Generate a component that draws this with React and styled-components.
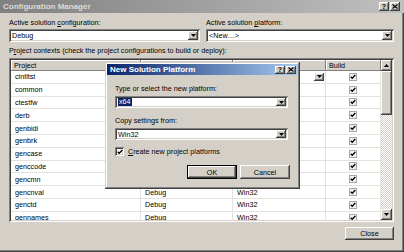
import styled, { createGlobalStyle, css } from 'styled-components';

const GlobalStyle = createGlobalStyle`
  html, body { margin: 0; padding: 0; background: #d4d0c8; }
  body {
    font-family: "Liberation Sans", Arial, sans-serif;
    font-size: 7.2px;
    color: #000;
  }
  #root { width: 404px; height: 252px; }
`;

const raised = css`
  box-shadow: inset -1px -1px #404040, inset 1px 1px #fff, inset -2px -2px #808080;
`;

const sunken = css`
  box-shadow: inset 1px 1px #808080, inset -1px -1px #fff, inset 2px 2px #404040, inset -2px -2px #d4d0c8;
`;

const Window = styled.div`
  position: relative;
  width: 404px;
  height: 252px;
  box-sizing: border-box;
  display: flex;
  flex-direction: column;
  background: #d4d0c8;
  box-shadow: inset -1px -1px #404040, inset -2px -2px #808080;
  overflow: hidden;
`;

const TitleBar = styled.div`
  height: ${p => p.$h}px;
  flex: none;
  display: flex;
  align-items: center;
  justify-content: space-between;
  padding: 0 ${p => p.$pr}px 0 3px;
  background: ${p => p.$active
    ? 'linear-gradient(90deg, #0a246a, #a6caf0)'
    : 'linear-gradient(90deg, #808080, #c0c0c0)'};
  color: ${p => p.$active ? '#fff' : '#dcdcdc'};
  font-weight: bold;
  font-size: 8px;
  white-space: nowrap;
`;

const CaptionButtons = styled.div`
  display: flex;
  gap: 1px;
`;

const CaptionButton = styled.span`
  width: 10px;
  height: ${p => p.$h || 9}px;
  background: #d4d0c8;
  ${raised};
  display: flex;
  align-items: center;
  justify-content: center;
  color: #000;
  font-size: 7px;
  font-weight: bold;
  line-height: 1;
`;

const Body = styled.div`
  flex: 1;
  display: flex;
  flex-direction: column;
  padding: 5px 10px 0 9px;
`;

const FieldRow = styled.div`
  display: grid;
  grid-template-columns: 191px 1fr;
  gap: 6px;
`;

const Field = styled.div`
  display: flex;
  flex-direction: column;
  gap: ${p => p.$gap || 2}px;
  margin-top: ${p => p.$mt || 0}px;
`;

const Label = styled.div`
  height: 9px;
  line-height: 9px;
  white-space: nowrap;
  margin-top: ${p => p.$mt || 0}px;
`;

const Combo = styled.div`
  height: ${p => p.$h || 13}px;
  box-sizing: border-box;
  background: #fff;
  ${sunken};
  display: flex;
  align-items: stretch;
  padding: 2px;
`;

const ComboText = styled.span`
  flex: 1;
  display: flex;
  align-items: center;
  padding-left: 1px;
  white-space: nowrap;
`;

const Selected = styled.span`
  background: #0a246a;
  color: #fff;
  padding: 0 1px;
  line-height: 8px;
`;

const DropButton = styled.span`
  width: 10px;
  flex: none;
  background: #d4d0c8;
  ${raised};
  display: flex;
  align-items: center;
  justify-content: center;
  height: ${p => p.$h ? `${p.$h}px` : 'auto'};
`;

const ListBox = styled.div`
  margin-top: 3px;
  height: 164px;
  flex: none;
  box-sizing: border-box;
  padding: 2px;
  background: #fff;
  ${sunken};
  display: flex;
  overflow: hidden;
`;

const Table = styled.div`
  flex: 1;
  display: flex;
  flex-direction: column;
  overflow: hidden;
`;

const columns = '130px 92px 93px 55px';

const HeaderRow = styled.div`
  display: grid;
  grid-template-columns: ${columns};
  height: 11px;
  flex: none;
`;

const HeaderCell = styled.div`
  background: #d4d0c8;
  box-shadow: inset -1px -1px #808080, inset 1px 1px #fff;
  padding-left: 3px;
  line-height: 11px;
  white-space: nowrap;
  overflow: hidden;
`;

const Row = styled.div`
  display: grid;
  grid-template-columns: ${columns};
  height: 12.8px;
  flex: none;
  background: #fff;
`;

const Cell = styled.div`
  box-sizing: border-box;
  border-right: 1px solid #e4e2dc;
  border-bottom: 1px solid #e4e2dc;
  display: flex;
  align-items: center;
  justify-content: ${p => p.$center ? 'center' : p.$combo ? 'space-between' : 'flex-start'};
  padding: 0 ${p => p.$combo ? 1 : 0}px 0 ${p => p.$center ? 0 : 4}px;
  white-space: nowrap;
  overflow: hidden;
`;

const GridCheck = styled.span`
  width: 8px;
  height: 8px;
  box-sizing: border-box;
  border: 1px solid #a8a8a8;
  background: #f2f2f2;
  display: flex;
  align-items: center;
  justify-content: center;
`;

const ScrollBar = styled.div`
  width: 11px;
  flex: none;
  display: flex;
  flex-direction: column;
`;

const ScrollArrow = styled.div`
  height: 11px;
  flex: none;
  background: #d4d0c8;
  ${raised};
  display: flex;
  align-items: center;
  justify-content: center;
`;

const Thumb = styled.div`
  height: 44px;
  flex: none;
  background: #d4d0c8;
  ${raised};
`;

const Track = styled.div`
  flex: 1;
  background: repeating-conic-gradient(#d4d0c8 0 25%, #fff 0 50%) 0 0 / 2px 2px;
`;

const Footer = styled.div`
  display: flex;
  justify-content: flex-end;
  gap: 3px;
  margin-top: ${p => p.$mt}px;
  margin-right: ${p => p.$mr || 0}px;
`;

const Button = styled.button`
  width: ${p => p.$w}px;
  height: ${p => p.$h}px;
  padding: 0;
  border: none;
  font: inherit;
  color: #000;
  background: #d4d0c8;
  box-shadow: ${p => p.$default
    ? 'inset 0 0 0 1px #000, inset -2px -2px #404040, inset 2px 2px #fff, inset -3px -3px #808080'
    : 'inset -1px -1px #404040, inset 1px 1px #fff, inset -2px -2px #808080'};
`;

const Dialog = styled.div`
  position: absolute;
  left: 105px;
  top: 62px;
  width: 195px;
  height: 127px;
  box-sizing: border-box;
  padding: 2px;
  background: #d4d0c8;
  box-shadow: inset -1px -1px #404040, inset 1px 1px #d4d0c8, inset -2px -2px #808080, inset 2px 2px #fff;
  display: flex;
  flex-direction: column;
`;

const DialogBody = styled.div`
  flex: 1;
  display: flex;
  flex-direction: column;
  padding: 9px 10px 0 8px;
`;

const CheckRow = styled.label`
  display: flex;
  align-items: center;
  gap: 4px;
  height: 9px;
  margin-top: 7px;
  white-space: nowrap;
`;

const CheckBox = styled.span`
  width: 9px;
  height: 9px;
  box-sizing: border-box;
  background: #fff;
  ${sunken};
  display: flex;
  align-items: center;
  justify-content: center;
`;

const Arrow = ({ up }) => (
  <svg width="5" height="3" viewBox="0 0 5 3">
    <polygon points={up ? '0,3 5,3 2.5,0' : '0,0 5,0 2.5,3'} fill="#000" />
  </svg>
);

const Tick = ({ size = 6 }) => (
  <svg width={size} height={size} viewBox="0 0 7 7">
    <polyline points="0.8,3.2 2.6,5 6.2,1.2" fill="none" stroke="#000" strokeWidth="1.5" />
  </svg>
);

const CloseGlyph = () => (
  <svg width="6" height="5" viewBox="0 0 6 5">
    <path d="M0.5 0.5 L5.5 4.5 M5.5 0.5 L0.5 4.5" stroke="#000" strokeWidth="1.2" />
  </svg>
);

const projects = [
  'cintltst', 'common', 'ctestfw', 'derb', 'genbidi', 'genbrk',
  'gencase', 'genccode', 'gencmn', 'gencnval', 'genctd', 'gennames',
];

export default function App() {
  return (
    <>
      <GlobalStyle />
      <Window>
        <TitleBar $h={13} $pr={4}>
          <span>Configuration Manager</span>
          <CaptionButtons>
            <CaptionButton>?</CaptionButton>
            <CaptionButton><CloseGlyph /></CaptionButton>
          </CaptionButtons>
        </TitleBar>

        <Body>
          <FieldRow>
            <Field>
              <Label>Active solution <u>c</u>onfiguration:</Label>
              <Combo>
                <ComboText>Debug</ComboText>
                <DropButton><Arrow /></DropButton>
              </Combo>
            </Field>
            <Field>
              <Label>Active solution <u>p</u>latform:</Label>
              <Combo>
                <ComboText>&lt;New…&gt;</ComboText>
                <DropButton><Arrow /></DropButton>
              </Combo>
            </Field>
          </FieldRow>

          <Label $mt={4}>P<u>r</u>oject contexts (check the project configurations to build or deploy):</Label>

          <ListBox>
            <Table>
              <HeaderRow>
                <HeaderCell>Project</HeaderCell>
                <HeaderCell>Configuration</HeaderCell>
                <HeaderCell>Platform</HeaderCell>
                <HeaderCell>Build</HeaderCell>
              </HeaderRow>
              {projects.map((name, i) => (
                <Row key={name}>
                  <Cell>{name}</Cell>
                  <Cell $combo={i === 0}>
                    Debug
                    {i === 0 && <DropButton $h={8}><Arrow /></DropButton>}
                  </Cell>
                  <Cell $combo={i === 0}>
                    Win32
                    {i === 0 && <DropButton $h={8}><Arrow /></DropButton>}
                  </Cell>
                  <Cell $center>
                    <GridCheck><Tick size={6} /></GridCheck>
                  </Cell>
                </Row>
              ))}
            </Table>
            <ScrollBar>
              <ScrollArrow><Arrow up /></ScrollArrow>
              <Thumb />
              <Track />
              <ScrollArrow><Arrow /></ScrollArrow>
            </ScrollBar>
          </ListBox>

          <Footer $mt={5}>
            <Button $w={49} $h={13}>Close</Button>
          </Footer>
        </Body>

        <Dialog>
          <TitleBar $active $h={11} $pr={2}>
            <span>New Solution Platform</span>
            <CaptionButtons>
              <CaptionButton $h={8}>?</CaptionButton>
              <CaptionButton $h={8}><CloseGlyph /></CaptionButton>
            </CaptionButtons>
          </TitleBar>
          <DialogBody>
            <Field $gap={3}>
              <Label>Type or select the new platform:</Label>
              <Combo $h={12}>
                <ComboText><Selected>x64</Selected></ComboText>
                <DropButton><Arrow /></DropButton>
              </Combo>
            </Field>
            <Field $gap={3} $mt={8}>
              <Label>Copy settings from:</Label>
              <Combo $h={12}>
                <ComboText>Win32</ComboText>
                <DropButton><Arrow /></DropButton>
              </Combo>
            </Field>
            <CheckRow>
              <CheckBox><Tick size={6} /></CheckBox>
              <span><u>C</u>reate new project platforms</span>
            </CheckRow>
            <Footer $mt={9} $mr={-2}>
              <Button $default $w={50} $h={14}>OK</Button>
              <Button $w={50} $h={14}>Cancel</Button>
            </Footer>
          </DialogBody>
        </Dialog>
      </Window>
    </>
  );
}
